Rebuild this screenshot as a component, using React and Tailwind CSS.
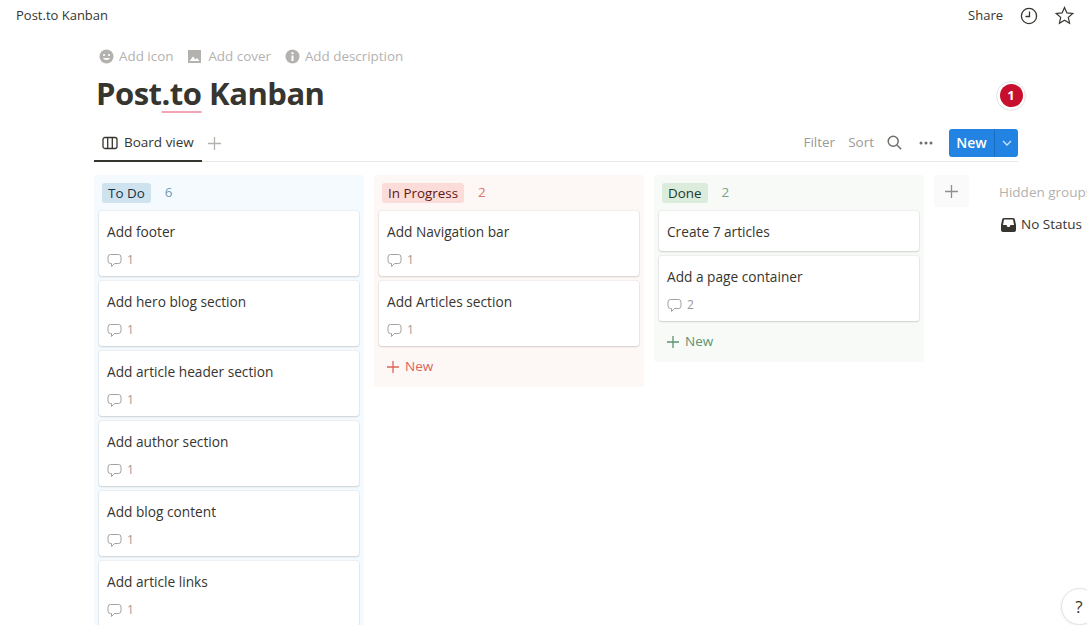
import React from "react";

function Comment({ n }) {
  return (
    <div className="flex items-center gap-[5px] h-[18px] mt-[9px] text-[12px] text-[#9b9a97]">
      <svg width="15" height="15" viewBox="0 0 15 15" fill="none" stroke="#a3a29f" strokeWidth="1">
        <path d="M3.500 1.500h8a2.500 2.500 0 0 1 2.500 2.500v4a2.500 2.500 0 0 1-2.500 2.500H7.500L4.500 13.500v-3h-1A2.500 2.500 0 0 1 1 8V4a2.500 2.500 0 0 1 2.500-2.500z" />
      </svg>
      <span>{n}</span>
    </div>
  );
}

function Card({ title, n }) {
  return (
    <div className="bg-white rounded-[3px] shadow-[0_0_0_1px_rgba(15,15,15,0.04),0_1px_2px_rgba(15,15,15,0.14)] min-h-[40px] pl-[8px] pr-[8px] pt-[11px] pb-[7px]">
      <div className="text-[13.7px] leading-[20px] font-medium text-[#37352f] whitespace-nowrap">{title}</div>
      {n ? <Comment n={n} /> : null}
    </div>
  );
}

function Column({ name, count, bg, tag, tagText, countText, newText, cards, showNew }) {
  return (
    <div className={`w-[270px] shrink-0 self-start rounded-[3px] px-[5px] ${bg}`}>
      <div className="h-[36px] flex items-center pl-[3px] pb-[1px]">
        <span className={`h-[20px] px-[6px] rounded-[3px] text-[13.4px] leading-[20px] ${tag} ${tagText}`}>{name}</span>
        <span className={`ml-[14px] text-[13.5px] ${countText}`}>{count}</span>
      </div>
      <div className="flex flex-col gap-[5px]">
        {cards.map((c) => (
          <Card key={c.t} title={c.t} n={c.n} />
        ))}
      </div>
      {showNew ? (
        <div className={`h-[41px] flex items-center gap-[5px] pl-[7px] text-[13.5px] ${newText}`}>
          <svg width="14" height="14" viewBox="0 0 14 14" stroke="currentColor" strokeWidth="1.300">
            <path d="M7 1v12M1 7h12" />
          </svg>
          <span>New</span>
        </div>
      ) : null}
    </div>
  );
}

export default function App() {
  return (
    <div className="relative h-[625px] w-[1087px] overflow-hidden bg-white text-[#37352f] font-['Open_Sans','Noto_Sans',sans-serif]">
      <header className="h-[31px] flex items-center justify-between pl-[16px] pr-[13px]">
        <span className="text-[13px] text-[#37352f]">Post.to Kanban</span>
        <div className="flex items-center">
          <span className="text-[13px] text-[#37352f]">Share</span>
          <svg className="ml-[17px]" width="18" height="18" viewBox="0 0 18 18" fill="none" stroke="#37352f" strokeWidth="1.300">
            <circle cx="9" cy="9" r="7.600" />
            <path d="M9.500 4.500V9.500H5.500" />
          </svg>
          <svg className="ml-[17px]" width="19" height="19" viewBox="0 0 19 19" fill="none" stroke="#37352f" strokeWidth="1.200">
            <path d="M9.500 1.500l2.400 5.400 5.800.6-4.400 3.900 1.300 5.800-5.100-3-5.100 3 1.300-5.800L1.300 7.500l5.800-.6z" />
          </svg>
        </div>
      </header>

      <main className="pl-[94px]">
        <div className="flex items-center h-[20px] mt-[15px] pl-[5px] text-[13.4px] text-[#b3b2af]">
          <svg width="15" height="15" viewBox="0 0 15 15" className="mr-[5px]">
            <circle cx="7.500" cy="7.500" r="7" fill="#b3b2af" />
            <circle cx="5" cy="6" r="1.100" fill="#fff" />
            <circle cx="10" cy="6" r="1.100" fill="#fff" />
            <path d="M4 9c1 2.500 6 2.500 7 0z" fill="#fff" />
          </svg>
          <span>Add icon</span>
          <svg width="15" height="15" viewBox="0 0 15 15" className="ml-[14px] mr-[6px]">
            <path d="M1 1h13v13H1z" fill="#b3b2af" />
            <path d="M2.500 12l3.500-4.500 2.500 3 1.500-1.500 2.500 3z" fill="#fff" />
          </svg>
          <span>Add cover</span>
          <svg width="15" height="15" viewBox="0 0 15 15" className="ml-[14px] mr-[5px]">
            <circle cx="7.500" cy="7.500" r="7" fill="#b3b2af" />
            <rect x="6.500" y="6.500" width="2" height="5.500" fill="#fff" />
            <rect x="6.500" y="3.200" width="2" height="2" fill="#fff" />
          </svg>
          <span>Add description</span>
        </div>

        <div className="flex items-center justify-between h-[48px] mt-[3px] pl-[2px] pr-[61px]">
          <h1 className="text-[31px] font-bold leading-[40px] text-[#37352f] whitespace-nowrap tracking-[-0.5px]">
            Post
            <span className="underline decoration-[#f4a5b5] decoration-2 underline-offset-[6px] [text-decoration-skip-ink:none]">.to</span>{" "}
            Kanban
          </h1>
          <div className="mt-[5px] w-[30px] h-[30px] rounded-full border border-[#dfe5e5] flex items-center justify-center">
            <div className="w-[23px] h-[23px] rounded-full bg-[#c8102e] text-white text-[13px] font-bold flex items-center justify-center">1</div>
          </div>
        </div>

        <div className="flex items-end justify-between mt-[10px] h-[35px] w-[924px] border-b border-[#e9e9e7]">
          <div className="flex items-center h-[34px]">
            <div className="flex items-center h-[35px] w-[108px] pl-[8px] pb-[2px] gap-[6px] border-b-2 border-[#37352f] -mb-px text-[13.5px]">
              <svg width="16" height="14" viewBox="0 0 16 14" fill="none" stroke="#37352f" strokeWidth="1.300">
                <rect x="1" y="1.500" width="14" height="11" rx="2" />
                <path d="M5.700 1.500v11M10.300 1.500v11" />
              </svg>
              <span>Board view</span>
            </div>
            <svg className="ml-[6px] -mt-[2px]" width="13" height="13" viewBox="0 0 13 13" stroke="#b3b2af" strokeWidth="1.300">
              <path d="M6.500 0v13M0 6.500h13" />
            </svg>
          </div>
          <div className="flex items-center h-[34px] pb-[3px] text-[13.5px] text-[#9b9a97]">
            <span>Filter</span>
            <span className="ml-[13px]">Sort</span>
            <svg className="ml-[13px]" width="15" height="15" viewBox="0 0 15 15" fill="none" stroke="#6f6e69" strokeWidth="1.500">
              <circle cx="6.200" cy="6.200" r="5" />
              <path d="M10 10l4.200 4.200" />
            </svg>
            <svg className="ml-[17px]" width="14" height="4" viewBox="0 0 14 4" fill="#6f6e69">
              <circle cx="2" cy="2" r="1.500" />
              <circle cx="7" cy="2" r="1.500" />
              <circle cx="12" cy="2" r="1.500" />
            </svg>
            <div className="ml-[16px] flex h-[28px] w-[69px] rounded-[3px] bg-[#2383e2] text-white overflow-hidden">
              <div className="w-[46px] flex items-center justify-center text-[14px] font-semibold border-r border-[#1b6ebf]">New</div>
              <div className="flex-1 flex items-center justify-center">
                <svg width="10" height="6" viewBox="0 0 10 6" fill="none" stroke="#cfe4f9" strokeWidth="1.300">
                  <path d="M1 1l4 4 4-4" />
                </svg>
              </div>
            </div>
          </div>
        </div>

        <div className="flex gap-[10px] mt-[13px] items-start">
          <Column
            name="To Do"
            count="6"
            bg="bg-[#f4fafd]"
            tag="bg-[#cfe3ee]"
            tagText="text-[#183347]"
            countText="text-[#6d9ab5]"
            cards={[
              { t: "Add footer", n: 1 },
              { t: "Add hero blog section", n: 1 },
              { t: "Add article header section", n: 1 },
              { t: "Add author section", n: 1 },
              { t: "Add blog content", n: 1 },
              { t: "Add article links", n: 1 },
            ]}
          />
          <Column
            name="In Progress"
            count="2"
            bg="bg-[#fdf7f5]"
            tag="bg-[#fcdcd8]"
            tagText="text-[#5d1715]"
            countText="text-[#d9756c]"
            newText="text-[#d9665c]"
            showNew
            cards={[
              { t: "Add Navigation bar", n: 1 },
              { t: "Add Articles section", n: 1 },
            ]}
          />
          <Column
            name="Done"
            count="2"
            bg="bg-[#f7faf7]"
            tag="bg-[#dbecdc]"
            tagText="text-[#1c3829]"
            countText="text-[#75a587]"
            newText="text-[#5f9272]"
            showNew
            cards={[
              { t: "Create 7 articles" },
              { t: "Add a page container", n: 2 },
            ]}
          />
          <div className="w-[35px] h-[32px] shrink-0 rounded-[3px] bg-[#fafafa] flex items-center justify-center">
            <svg width="13" height="13" viewBox="0 0 13 13" stroke="#8f8e8b" strokeWidth="1.300">
              <path d="M6.500 0v13M0 6.500h13" />
            </svg>
          </div>
          <div className="ml-[20px] shrink-0 w-[200px]">
            <div className="h-[34px] flex items-center text-[13.5px] text-[#b3b2af] whitespace-nowrap">Hidden groups</div>
            <div className="h-[31px] pl-[2px] flex items-center gap-[5px] text-[13.5px] font-medium text-[#37352f] whitespace-nowrap">
              <svg width="15" height="14" viewBox="0 0 15 14" fill="#37352f">
                <path d="M3 0h9a2 2 0 0 1 2 2l1 5v5a2 2 0 0 1-2 2H2a2 2 0 0 1-2-2V7l1-5a2 2 0 0 1 2-2zm0 1.500L2 7h3.500l1 2h2l1-2H13l-1-5.500z" />
              </svg>
              <span>No Status</span>
            </div>
          </div>
        </div>
      </main>

      <div className="absolute left-[1061px] top-[588px] w-[37px] h-[37px] rounded-full bg-white border border-[#e3e3e1] shadow-[0_1px_3px_rgba(15,15,15,0.08)] flex items-center justify-center text-[17px] text-[#37352f]">
        <span className="-ml-[1px]">?</span>
      </div>
    </div>
  );
}
